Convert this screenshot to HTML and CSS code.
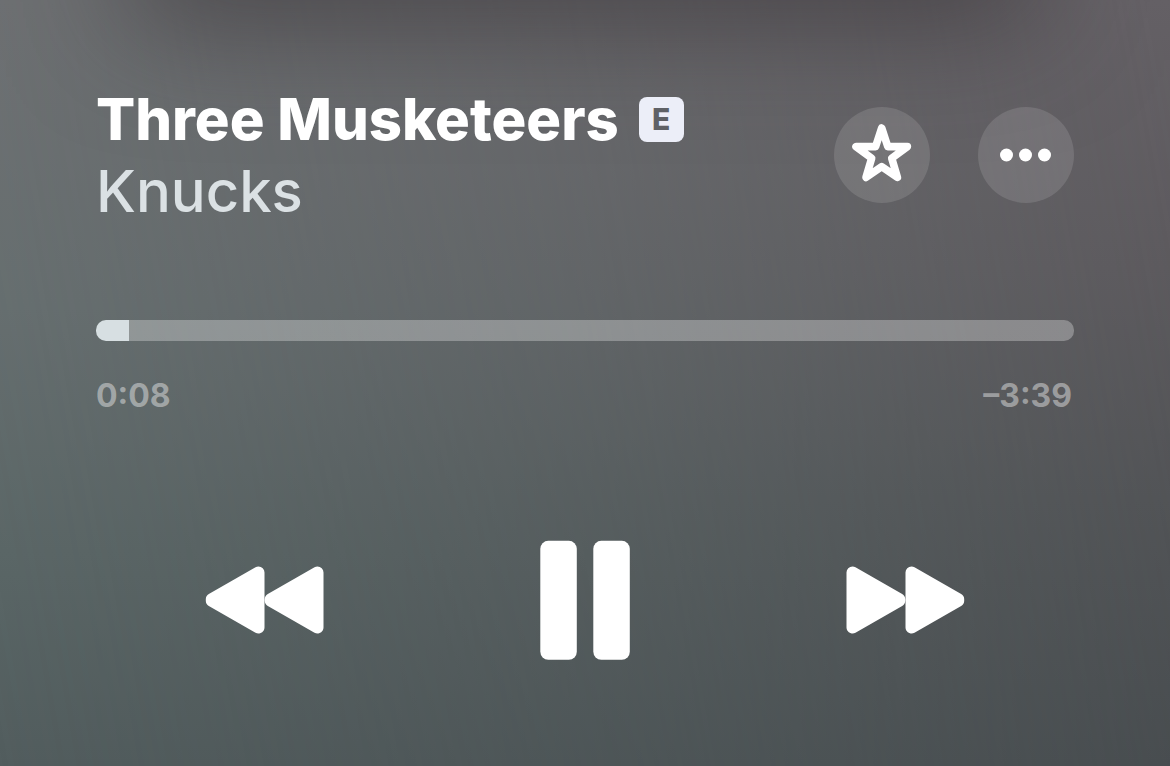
FILE: index.html
```html
<!DOCTYPE html>
<html lang="en">
<head>
<meta charset="utf-8">
<meta name="viewport" content="width=device-width, initial-scale=1">
<title>Three Musketeers – Knucks</title>
<link rel="stylesheet" href="styles.css">
</head>
<body>
<main class="player">
  <header class="track">
    <div class="track-info">
      <h1 class="title">Three Musketeers <span class="explicit">E</span></h1>
      <p class="artist">Knucks</p>
    </div>
    <div class="actions">
      <button class="round" type="button" aria-label="Favourite">
        <svg viewBox="0 0 96 96" aria-hidden="true"><path class="star" d="M47.7 21 53.8 39.6H73.4L57.7 51.2 63.4 70.4 47.7 59.6 32 70.4 37.7 51.2 22 39.6H41.6Z"/></svg>
      </button>
      <button class="round" type="button" aria-label="More">
        <svg viewBox="0 0 96 96" aria-hidden="true"><circle cx="28.5" cy="48" r="6.5"/><circle cx="47.5" cy="48" r="6.5"/><circle cx="66.5" cy="48" r="6.5"/></svg>
      </button>
    </div>
  </header>
  <section class="timeline">
    <input class="seek" type="range" min="0" max="227" value="8" aria-label="Playback position" style="--played: 3.4%">
    <div class="times"><span>0:08</span><span>–3:39</span></div>
  </section>
  <div class="controls">
    <button class="control" type="button" aria-label="Previous">
      <svg width="120" height="120" viewBox="0 0 120 120" aria-hidden="true"><path class="seek-icon" d="M6.8 59.2V60.8L53.5 87.5V32.5ZM65.8 59.2V60.8L112.5 87.5V32.5Z"/></svg>
    </button>
    <button class="control" type="button" aria-label="Pause">
      <svg width="90" height="120" viewBox="0 0 90 120" aria-hidden="true"><rect x=".3" y=".8" width="36.5" height="119" rx="8"/><rect x="53.3" y=".8" width="36.5" height="119" rx="8"/></svg>
    </button>
    <button class="control" type="button" aria-label="Next">
      <svg width="120" height="120" viewBox="0 0 120 120" aria-hidden="true"><path class="seek-icon" d="M54.2 59.2V60.8L7.5 87.5V32.5ZM113.2 59.2V60.8L66.5 87.5V32.5Z"/></svg>
    </button>
  </div>
</main>
</body>
</html>
```
FILE: styles.css
```css
* { box-sizing: border-box; }
body {
  margin: 0;
  font-family: Inter, "Liberation Sans", sans-serif;
  color: #fff;
}
.player {
  position: relative;
  isolation: isolate;
  overflow: hidden;
  min-height: 100vh;
  padding: 83px 96px 0;
  background: linear-gradient(#6f7274, #677071 40%, #5b6767 72%, #525d5e);
}
.player::before,
.player::after {
  content: "";
  position: absolute;
  z-index: -1;
}
/* warmer tint towards the right edge */
.player::before {
  inset: 0;
  background: linear-gradient(#656166, #5c595d 35%, #515255 65%, #474b4e);
  -webkit-mask-image: linear-gradient(80deg, transparent, rgba(0, 0, 0, .45) 50%, #000);
  mask-image: linear-gradient(80deg, transparent, rgba(0, 0, 0, .45) 50%, #000);
}
/* shadow cast by the artwork above */
.player::after {
  left: 13%;
  right: 13%;
  top: -80px;
  height: 80px;
  box-shadow: 0 0 120px 20px rgba(48, 43, 47, .62);
}
.track {
  display: flex;
  align-items: center;
  justify-content: space-between;
}
.title, .artist {
  margin: 0;
  font-size: 58px;
  line-height: 72px;
}
.title {
  display: flex;
  align-items: center;
  gap: 20px;
  font-weight: 800;
}
.artist { font-weight: 500; color: #dbe1e4; }
.explicit {
  width: 45px;
  border-radius: 8px;
  background: #eceef8;
  color: #5f6166;
  font-size: 30px;
  font-weight: 800;
  line-height: 45px;
  text-align: center;
}
.actions { display: flex; gap: 48px; }
button {
  padding: 0;
  border: 0;
  background: none;
  color: inherit;
  cursor: pointer;
}
svg { display: block; fill: currentColor; }
.round {
  width: 96px;
  height: 96px;
  border-radius: 50%;
  background: rgba(255, 255, 255, .12);
}
.star {
  fill: none;
  stroke: currentColor;
  stroke-width: 7.6;
  stroke-linejoin: round;
}
.timeline { margin-top: 93px; }
.seek {
  display: block;
  appearance: none;
  width: 100%;
  height: 21px;
  margin: 0;
  border-radius: 10px;
  background: linear-gradient(90deg, #d7dfe2 var(--played), rgba(255, 255, 255, .29) var(--played));
}
.seek::-webkit-slider-thumb {
  appearance: none;
  width: 21px;
  height: 21px;
  background: transparent;
}
.times {
  display: flex;
  justify-content: space-between;
  margin-top: 35px;
  padding: 0 2px 0 0;
  font-size: 32px;
  font-weight: 700;
  line-height: 40px;
  color: rgba(255, 255, 255, .42);
}
.controls {
  display: grid;
  grid-template-columns: repeat(3, 1fr);
  justify-items: center;
  margin-top: 124px;
  padding: 0 9px;
}
.seek-icon {
  stroke: currentColor;
  stroke-width: 12;
  stroke-linejoin: round;
}
```
